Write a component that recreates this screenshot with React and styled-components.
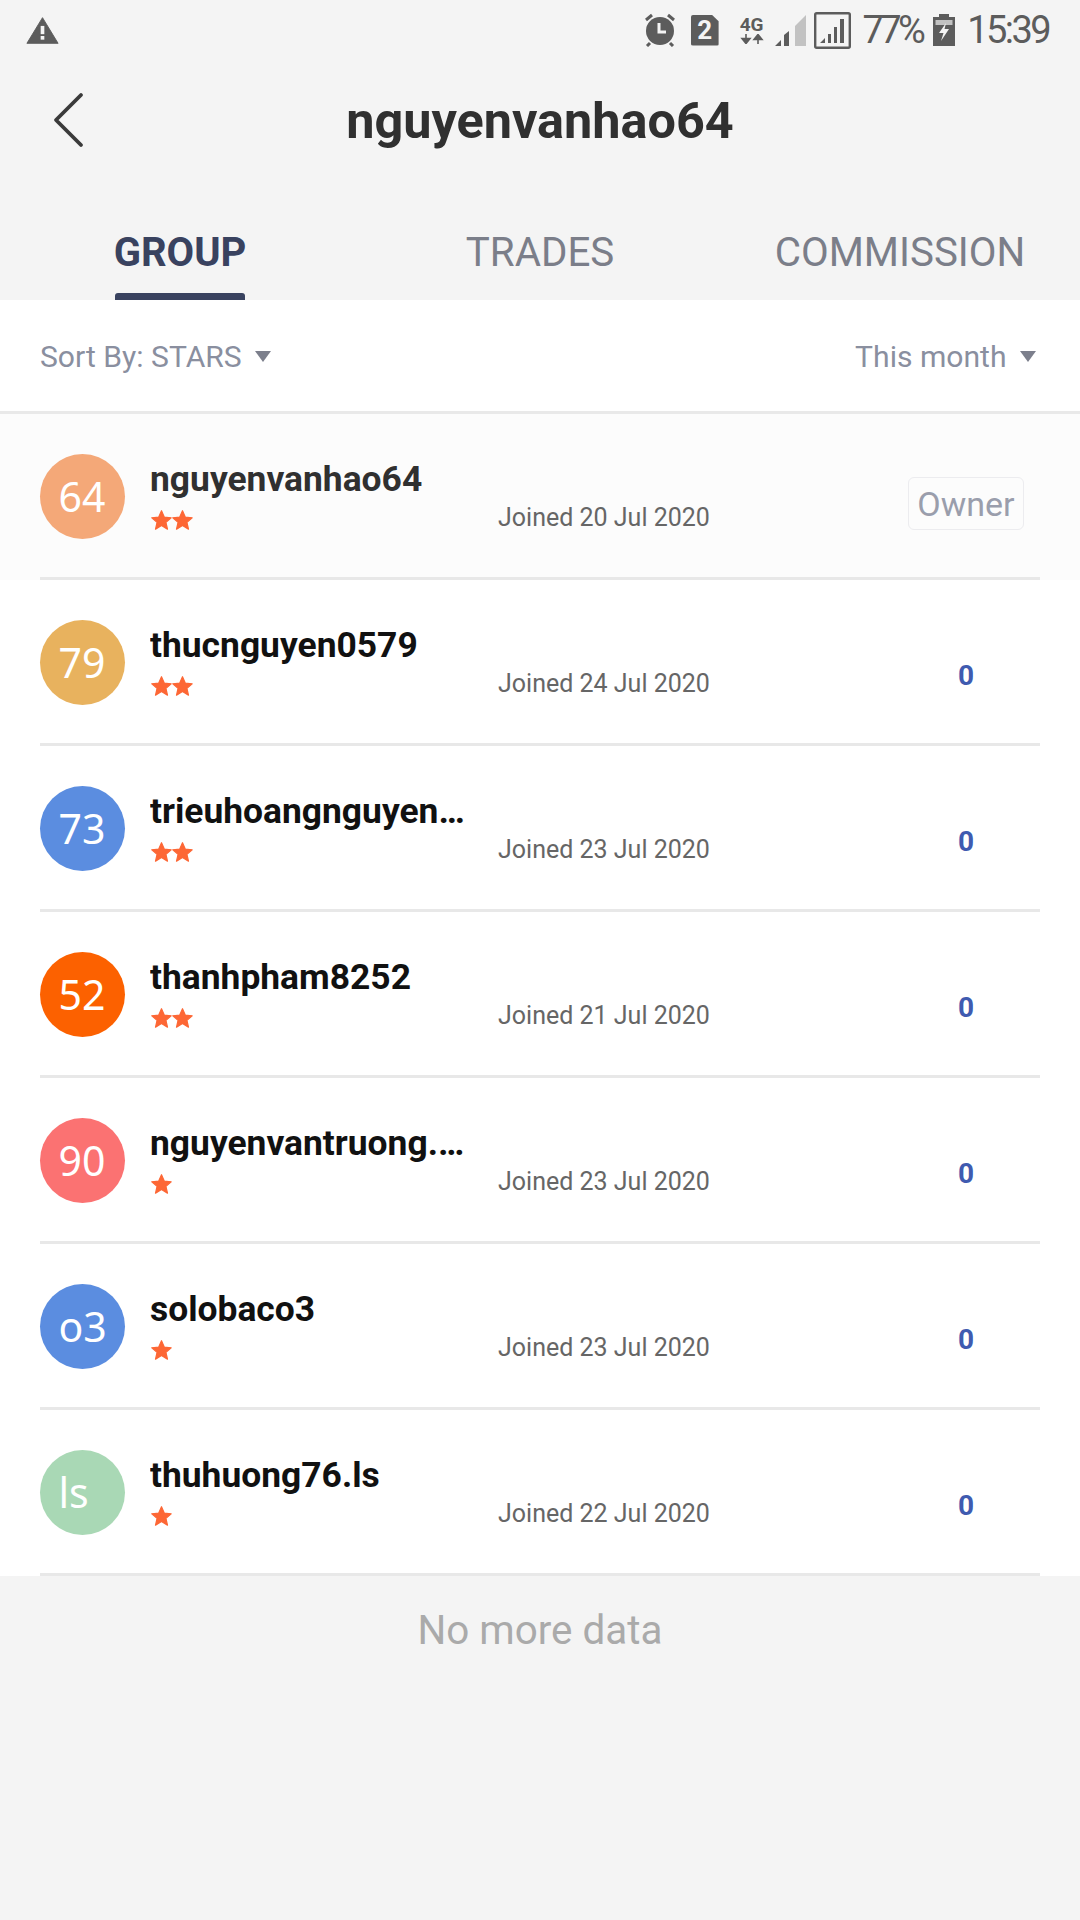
import React from "react";
import styled, { createGlobalStyle } from "styled-components";

const members = [
  { id: "64", color: "#f4a878", name: "nguyenvanhao64", stars: 2, joined: "20 Jul 2020", owner: true },
  { id: "79", color: "#e8b25e", name: "thucnguyen0579", stars: 2, joined: "24 Jul 2020" },
  { id: "73", color: "#5b8de0", name: "trieuhoangnguyen1973", stars: 2, joined: "23 Jul 2020" },
  { id: "52", color: "#fc6100", name: "thanhpham8252", stars: 2, joined: "21 Jul 2020" },
  { id: "90", color: "#fb7272", name: "nguyenvantruong.1990", stars: 1, joined: "23 Jul 2020" },
  { id: "o3", color: "#5b8de0", name: "solobaco3", stars: 1, joined: "23 Jul 2020" },
  { id: "ls", color: "#a9d8b5", name: "thuhuong76.ls", stars: 1, joined: "22 Jul 2020" },
];

const App = () => {
  return (
    <Page>
      <GlobalStyle />
      <StatusBar>
        <svg width="33" height="29" viewBox="0 0 36 30">
          <path d="M18 1 L35 29 H1 Z" fill="#5c5c5c" stroke="#5c5c5c" strokeWidth="1" strokeLinejoin="round" />
          <rect x="16" y="10" width="4" height="9" fill="#f4f4f4" />
          <rect x="16" y="21" width="4" height="4" fill="#f4f4f4" />
        </svg>
        <StatusRight>
          <svg width="34" height="34" viewBox="0 0 34 34">
            <circle cx="17" cy="18" r="14" fill="#5c5c5c" />
            <path d="M3 7 L9 2 M31 7 L25 2 M7 30 L4 33 M27 30 L30 33" stroke="#5c5c5c" strokeWidth="3" />
            <path d="M16 10 V19 H23" stroke="#f4f4f4" strokeWidth="3" fill="none" />
          </svg>
          <SimIcon>2</SimIcon>
          <NetIcon>
            <span>4G</span>
            <svg width="24" height="10" viewBox="0 0 24 10">
              <path d="M6 0 V5 M2 4.5 H10 L6 9.5 Z M18 10 V5 M14 5.5 H22 L18 0.5 Z" fill="#5c5c5c" stroke="#5c5c5c" strokeWidth="1.6" />
            </svg>
          </NetIcon>
          <svg width="32" height="34" viewBox="0 0 32 34" style={{ marginLeft: 10 }}>
            <path d="M0 33 L6 27 V33 Z M9 33 V22 L14 18 V33 Z" fill="#5c5c5c" />
            <path d="M20 33 V13 L31 2 V33 Z" fill="#c2c2c2" />
          </svg>
          <svg width="37" height="37" viewBox="0 0 37 37" style={{ marginLeft: 7 }}>
            <rect x="1.2" y="1.2" width="34.6" height="34.6" rx="1.5" fill="none" stroke="#5c5c5c" strokeWidth="2.4" />
            <path d="M6 31 L11 26 V31 Z M14 31 V22 H17 V31 Z M20 31 V15 H23 V31 Z M26 31 V7 H30 V31 Z" fill="#5c5c5c" />
          </svg>
          <StatusText>77%</StatusText>
          <svg width="22" height="32" viewBox="0 0 22 32" style={{ marginLeft: 11 }}>
            <rect x="6" y="0" width="10" height="4" fill="#5c5c5c" />
            <rect x="0" y="3" width="22" height="29" fill="#5c5c5c" />
            <rect x="2.5" y="6" width="17" height="5" fill="#c2c2c2" />
            <path d="M13 9 L6 19 H10.5 L8 27 L16 15 H11.5 Z" fill="#f4f4f4" />
          </svg>
          <StatusText wide>15:39</StatusText>
        </StatusRight>
      </StatusBar>

      <TitleBar>
        <BackIcon width="32" height="56" viewBox="0 0 32 56">
          <path d="M28 3 L3 28 L28 53" fill="none" stroke="#3a3a3a" strokeWidth="3.8" strokeLinecap="round" strokeLinejoin="round" />
        </BackIcon>
        <Title>nguyenvanhao64</Title>
      </TitleBar>

      <Tabs>
        <Tab active>GROUP</Tab>
        <Tab>TRADES</Tab>
        <Tab>COMMISSION</Tab>
      </Tabs>

      <SortRow>
        <SortLabel>
          Sort By: STARS <Caret />
        </SortLabel>
        <SortLabel>
          This month <Caret />
        </SortLabel>
      </SortRow>

      <List>
        {members.map((m) => (
          <Row key={m.name} owner={m.owner}>
            <RowInner>
              <Avatar color={m.color}>
                <AvatarText>{m.id}</AvatarText>
              </Avatar>
              <NameCol>
                <Name owner={m.owner}>{m.name}</Name>
                <Stars>
                  {Array.from({ length: m.stars }).map((_, i) => (
                    <svg key={i} width="21" height="22" viewBox="-1 -1 26 25">
                      <path
                        d="M12 0 L15.4 7.9 L24 8.7 L17.5 14.4 L19.4 22.8 L12 18.4 L4.6 22.8 L6.5 14.4 L0 8.7 L8.6 7.9 Z"
                        fill="#fd6735"
                        stroke="#fd6735"
                        strokeWidth="1.5"
                        strokeLinejoin="round"
                      />
                    </svg>
                  ))}
                </Stars>
              </NameCol>
              <Joined>Joined {m.joined}</Joined>
              <RightCol>{m.owner ? <OwnerTag>Owner</OwnerTag> : <Count>0</Count>}</RightCol>
            </RowInner>
          </Row>
        ))}
      </List>

      <Footer>No more data</Footer>
    </Page>
  );
};

const GlobalStyle = createGlobalStyle`
  html, body {
    margin: 0;
    padding: 0;
    background: #f4f4f4;
  }
`;

const Page = styled.div`
  width: 1080px;
  height: 1920px;
  overflow: hidden;
  background: #f4f4f4;
  font-family: Roboto, "Liberation Sans", sans-serif;
`;

const StatusBar = styled.div`
  height: 60px;
  padding: 0 31px 0 26px;
  display: flex;
  align-items: center;
  justify-content: space-between;
  box-sizing: border-box;
`;

const StatusRight = styled.div`
  display: flex;
  align-items: center;
`;

const SimIcon = styled.div`
  width: 28px;
  height: 31px;
  margin-left: 14px;
  background: #5c5c5c;
  color: #f4f4f4;
  font-size: 26px;
  font-weight: 700;
  line-height: 31px;
  text-align: center;
  border-radius: 2px;
  clip-path: polygon(0 0, 75% 0, 100% 22%, 100% 100%, 0 100%);
`;

const NetIcon = styled.div`
  width: 26px;
  margin-left: 20px;
  display: flex;
  flex-direction: column;
  align-items: center;
  color: #5c5c5c;
  font-size: 19px;
  font-weight: 700;
  line-height: 18px;
`;

const StatusText = styled.span`
  color: #5c5c5c;
  font-size: 38px;
  line-height: 44px;
  margin-left: 12px;
  letter-spacing: ${(p) => (p.wide ? "-2.6px" : "-3.6px")};
`;

const TitleBar = styled.div`
  height: 120px;
  position: relative;
  display: flex;
  align-items: center;
  justify-content: center;
`;

const BackIcon = styled.svg`
  position: absolute;
  left: 53px;
  top: 32px;
`;

const Title = styled.div`
  color: #303030;
  font-size: 50.4px;
  font-weight: 700;
`;

const Tabs = styled.div`
  height: 120px;
  display: grid;
  grid-template-columns: 360px 360px 360px;
`;

const Tab = styled.div`
  position: relative;
  justify-self: center;
  height: 120px;
  box-sizing: border-box;
  padding-top: 50px;
  color: ${(p) => (p.active ? "#39425f" : "#7b7e89")};
  font-size: ${(p) => (p.active ? "40px" : "40.3px")};
  line-height: 46px;
  font-weight: ${(p) => (p.active ? 700 : 400)};

  &::after {
    content: "";
    display: ${(p) => (p.active ? "block" : "none")};
    position: absolute;
    left: 1px;
    right: 1px;
    bottom: 0;
    height: 7px;
    border-radius: 3px 3px 0 0;
    background: #39425f;
  }
`;

const SortRow = styled.div`
  height: 109px;
  padding: 2px 44px 0 40px;
  display: flex;
  align-items: center;
  justify-content: space-between;
  background: #ffffff;
  border-bottom: 3px solid #e9e9e9;
`;

const SortLabel = styled.div`
  display: flex;
  align-items: center;
  color: #8a8f9f;
  font-size: 30.1px;
  white-space: pre;
`;

const Caret = styled.span`
  width: 0;
  height: 0;
  margin-left: 6px;
  border-left: 8px solid transparent;
  border-right: 8px solid transparent;
  border-top: 11px solid #7c7f8c;
`;

const List = styled.div`
  display: flex;
  flex-direction: column;
`;

const Row = styled.div`
  background: ${(p) => (p.owner ? "#fcfcfc" : "#ffffff")};
  padding: 0 40px;
`;

const RowInner = styled.div`
  height: 163px;
  display: flex;
  align-items: center;
  border-bottom: 3px solid #e8e8e8;
`;

const Avatar = styled.div`
  flex: none;
  width: 85px;
  height: 85px;
  margin-top: 2px;
  border-radius: 50%;
  background: ${(p) => p.color};
  display: flex;
  align-items: center;
  justify-content: center;
`;

const AvatarText = styled.span`
  width: 48px;
  color: #ffffff;
  font-family: "Noto Sans", sans-serif;
  font-size: 41px;
  line-height: 85px;
  white-space: nowrap;
`;

const NameCol = styled.div`
  flex: none;
  width: 320px;
  margin-left: 25px;
  margin-top: -2px;
`;

const Name = styled.div`
  color: ${(p) => (p.owner ? "#303030" : "#111111")};
  font-size: 35.4px;
  line-height: 42px;
  font-weight: 700;
  white-space: nowrap;
  overflow: hidden;
  text-overflow: ellipsis;
`;

const Stars = styled.div`
  display: flex;
  height: 24px;
  margin-top: 8px;
  margin-left: 1px;
  align-items: center;
`;

const Joined = styled.div`
  flex: none;
  width: 393px;
  margin-left: 28px;
  margin-top: 44px;
  color: #666666;
  font-size: 25px;
`;

const RightCol = styled.div`
  flex: none;
  width: 150px;
  display: flex;
  justify-content: center;
  margin-top: 28px;
`;

const OwnerTag = styled.div`
  width: 116px;
  height: 53px;
  margin-top: -12px;
  box-sizing: border-box;
  border: 1px solid #ececef;
  border-radius: 6px;
  color: #9a9eac;
  font-size: 34px;
  line-height: 53px;
  text-align: center;
`;

const Count = styled.div`
  color: #3f5bb0;
  font-size: 28px;
  font-weight: 700;
`;

const Footer = styled.div`
  height: 108px;
  display: flex;
  align-items: center;
  justify-content: center;
  color: #aaaaaa;
  font-size: 40.4px;
`;

export default App;
